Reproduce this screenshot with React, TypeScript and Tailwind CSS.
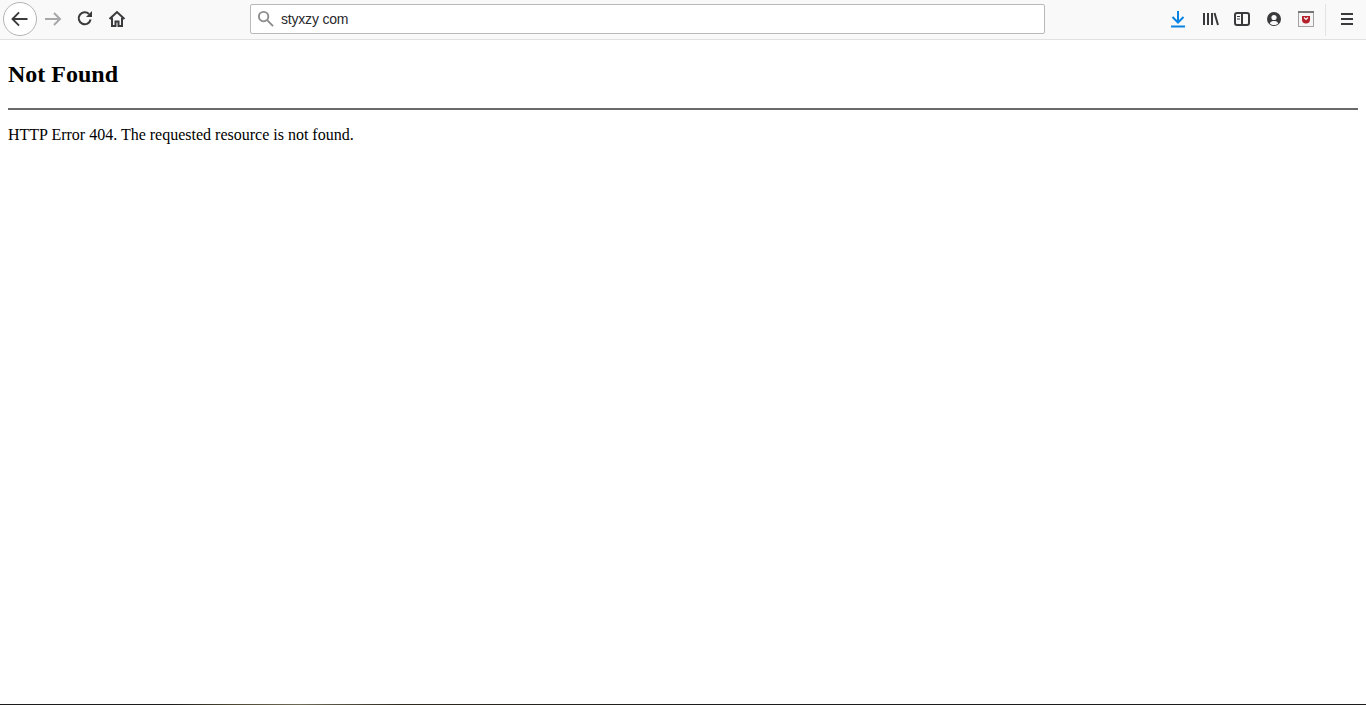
import React from "react";

function Back() {
  return (
    <svg width="34" height="34" viewBox="0 0 34 34" fill="none" stroke="#3a3a3c" strokeWidth="2">
      <path d="M25 17H9M16 10l-7 7 7 7" />
    </svg>
  );
}
function Forward() {
  return (
    <svg width="18" height="18" viewBox="0 0 18 18" fill="none" stroke="#a8a8aa" strokeWidth="2">
      <path d="M1 9h15M10 3l6 6-6 6" />
    </svg>
  );
}
function Reload() {
  return (
    <svg width="16" height="16" viewBox="0 0 16 16" fill="none" stroke="#3a3a3c" strokeWidth="2">
      <path d="M13.6 9.5A6 6 0 1 1 12 4" />
      <path d="M15 1v6H9" fill="#3a3a3c" stroke="none" />
    </svg>
  );
}
function Home() {
  return (
    <svg width="18" height="18" viewBox="0 0 18 18" fill="none" stroke="#3a3a3c" strokeWidth="2">
      <path d="M1.5 9 9 2l7.5 7" />
      <path d="M4 7.5V16h3.5v-4.5h3V16H14V7.5" />
    </svg>
  );
}
function Download() {
  return (
    <svg width="16" height="18" viewBox="0 0 16 18" fill="none" stroke="#0a84e0" strokeWidth="2">
      <path d="M8 1v11M2.5 7 8 12.5 13.5 7M1 16.5h14" />
    </svg>
  );
}
function Library() {
  return (
    <svg width="17" height="16" viewBox="0 0 17 16" fill="none" stroke="#3a3a3c" strokeWidth="2">
      <path d="M2 2v12M6 2v12M10 2v12M12.5 2l3.5 12" />
    </svg>
  );
}
function Sidebar() {
  return (
    <svg width="16" height="14" viewBox="0 0 16 14" fill="none" stroke="#3a3a3c">
      <rect x="1" y="1" width="14" height="12" rx="2" strokeWidth="2" />
      <path d="M8 1v12" strokeWidth="2" />
      <path d="M3 4.5h3M3 7h3" strokeWidth="1" />
    </svg>
  );
}
function Account() {
  return (
    <svg width="14" height="14" viewBox="0 0 14 14">
      <circle cx="7" cy="7" r="7" fill="#3a3a3c" />
      <circle cx="7" cy="5.5" r="2.6" fill="#f9f9fa" />
      <path d="M2.8 11.5C3.5 9.5 5 9 7 9s3.5.5 4.2 2.5C10 12.6 8.5 13 7 13s-3-.4-4.2-1.5Z" fill="#f9f9fa" />
    </svg>
  );
}
function Pocket() {
  return (
    <svg width="16" height="16" viewBox="0 0 16 16">
      <rect x="0.5" y="0.5" width="15" height="15" fill="#f6f4f4" stroke="#a2a2a4" />
      <rect x="0" y="0" width="16" height="2" fill="#77777a" />
      <path d="M4 5h8v3.5a4 4 0 0 1-8 0Z" fill="#b3202c" />
      <path d="M6 6.5 8 8.5l2-2" fill="none" stroke="#f6f4f4" strokeWidth="1.2" />
    </svg>
  );
}
function Menu() {
  return (
    <svg width="14" height="12" viewBox="0 0 14 12" fill="none" stroke="#3a3a3c" strokeWidth="2">
      <path d="M1 1h12M1 6h12M1 11h12" />
    </svg>
  );
}
function Search() {
  return (
    <svg width="17" height="17" viewBox="0 0 18 18" fill="none" stroke="#8c8c8e" strokeWidth="2">
      <circle cx="7" cy="7" r="5" />
      <path d="m11 11 6 6" />
    </svg>
  );
}

export default function App() {
  return (
    <div className="h-[705px] flex flex-col overflow-hidden bg-white font-['Liberation_Sans',sans-serif]">
      <header className="h-[40px] shrink-0 flex items-center bg-[#f9f9fa] border-b border-[#e1e1e2]">
        <div className="w-[250px] shrink-0 flex items-center">
          <div className="ml-[3px] mt-[-1px] w-[34px] h-[34px] rounded-full bg-white border border-[#b4b4b6] flex items-center justify-center">
            <Back />
          </div>
          <div className="ml-[7px] mt-[-2px] w-[18px] flex justify-center"><Forward /></div>
          <div className="ml-[15px] mt-[-3px] w-[16px] flex justify-center"><Reload /></div>
          <div className="ml-[15px] mt-[-2px] w-[18px] flex justify-center"><Home /></div>
        </div>
        <div className="w-[795px] h-[30px] mt-[-2px] shrink-0 flex items-center bg-white border border-[#b9b9bb] rounded-[2px]">
          <div className="ml-[6px] mt-[-1px] w-[18px] flex"><Search /></div>
          <span className="ml-[6px] mt-[1px] text-[14px] tracking-[-0.2px] text-[#2a2a2c]">styxzy com</span>
        </div>
        <div className="flex-1 flex items-center">
          <div className="ml-[125px] mt-[-2px] w-[16px] flex justify-center"><Download /></div>
          <div className="ml-[16px] mt-[-2px] w-[17px] flex justify-center"><Library /></div>
          <div className="ml-[15px] mt-[-2px] w-[16px] flex justify-center"><Sidebar /></div>
          <div className="ml-[17px] mt-[-2px] w-[14px] flex justify-center"><Account /></div>
          <div className="ml-[17px] mt-[-2px] w-[16px] flex justify-center"><Pocket /></div>
          <div className="ml-[11px] w-px h-[32px] bg-[#e4e4e5]" />
          <div className="ml-[14px] mt-[-2px] w-[14px] flex justify-center"><Menu /></div>
        </div>
      </header>
      <main className="flex-1 px-2 text-black font-['Liberation_Serif',serif]">
        <h2 className="mt-[19px] text-[24px] leading-[30px] font-bold">Not Found</h2>
        <hr className="mt-[19px] border-0 h-[2px] bg-[#6a6a6a]" />
        <p className="mt-[15px] text-[16px] leading-[20px]">HTTP Error 404. The requested resource is not found.</p>
      </main>
      <div className="h-px shrink-0 bg-[linear-gradient(to_right,#1c1c1c_0px,#1c1c1c_170px,#4a4632_230px,#6e6a58_300px,#2e2a20_400px,#1c1c1c_700px)]" />
    </div>
  );
}
